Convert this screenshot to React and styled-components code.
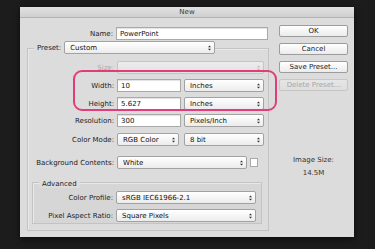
import React from "react";
import styled, { createGlobalStyle } from "styled-components";

const GlobalStyle = createGlobalStyle`
  html, body {
    margin: 0;
    padding: 0;
    background: #1c1c1c;
  }
  body {
    font-family: "DejaVu Sans", "Liberation Sans", sans-serif;
    font-size: 7px;
    color: #1e1e1e;
  }
`;

const Page = styled.div`
  width: 375px;
  height: 249px;
  padding: 7px 0 0 20px;
  box-sizing: border-box;
  background: #1c1c1c;
`;

const Dialog = styled.div`
  position: relative;
  width: 334px;
  height: 230px;
  background: #dcdcdc;
  box-shadow: 0 2px 6px rgba(0, 0, 0, 0.6);
  display: flex;
  flex-direction: column;
`;

const TitleBar = styled.div`
  height: 10px;
  line-height: 10px;
  text-align: center;
  color: #3a3a3a;
  background: linear-gradient(#e2e2e2, #cfcfcf);
  border-bottom: 1px solid #b4b4b4;
`;

const Body = styled.div`
  display: flex;
  flex: 1;
`;

const Left = styled.div`
  width: 255px;
  display: flex;
  flex-direction: column;
`;

const Right = styled.div`
  width: 69px;
  margin-left: 4px;
  padding-top: 7px;
  display: flex;
  flex-direction: column;
  gap: 6px;
`;

const Row = styled.div`
  display: flex;
  align-items: center;
  height: 13px;
  margin-top: ${p => p.mt || 0}px;
`;

const Label = styled.div`
  width: ${p => p.w}px;
  margin-right: 3px;
  text-align: right;
  white-space: nowrap;
  color: ${p => (p.disabled ? "#a9a9a9" : "#222")};
`;

const Field = styled.div`
  width: ${p => p.w}px;
  height: 100%;
  box-sizing: border-box;
  padding-left: 3px;
  display: flex;
  align-items: center;
  background: #fff;
  border: 1px solid #a9a9a9;
  box-shadow: inset 0 1px 1px rgba(0, 0, 0, 0.12);
  color: #111;
  margin-right: ${p => p.mr || 0}px;
`;

const SelectBox = styled.div`
  width: ${p => p.w}px;
  height: 100%;
  box-sizing: border-box;
  padding: 0 3px 0 5px;
  display: flex;
  align-items: center;
  justify-content: space-between;
  border: 1px solid ${p => (p.disabled ? "#c4c4c4" : "#a2a2a2")};
  border-radius: 2px;
  background: ${p =>
    p.disabled
      ? "linear-gradient(#ececec, #e2e2e2)"
      : "linear-gradient(#ffffff, #ececec)"};
  color: #111;
  margin-right: ${p => p.mr || 0}px;
`;

const Arrows = ({ faded }) => (
  <svg width="3" height="6" viewBox="0 0 3 6">
    <path d="M0 2.2 L1.5 0.5 L3 2.2 Z M0 3.8 L1.5 5.5 L3 3.8 Z" fill={faded ? "#b8b8b8" : "#333"} />
  </svg>
);

const Select = ({ w, children, disabled, mr }) => (
  <SelectBox w={w} disabled={disabled} mr={mr}>
    <span>{children}</span>
    <Arrows faded={disabled} />
  </SelectBox>
);

const Group = styled.div`
  margin: ${p => p.m};
  width: ${p => p.w}px;
  box-sizing: border-box;
  border: 1px solid #c3c3c3;
  box-shadow: inset 1px 1px 0 #e8e8e8;
  background: ${p => p.bg || "transparent"};
  padding-bottom: ${p => p.pb || 0}px;
`;

const GroupHead = styled.div`
  display: flex;
  align-items: center;
  height: ${p => p.h}px;
  margin-top: ${p => p.mt}px;
  padding-left: ${p => p.pl}px;
`;

const Legend = styled.span`
  padding: 0 3px;
  background: #dcdcdc;
  color: #222;
`;

const Check = styled.div`
  width: 8px;
  height: 9px;
  box-sizing: border-box;
  margin-left: 3px;
  background: #fff;
  border: 1px solid #a9a9a9;
`;

const Button = styled.div`
  height: 12px;
  box-sizing: border-box;
  display: flex;
  align-items: center;
  justify-content: center;
  border: 1px solid ${p => (p.disabled ? "#c6c6c6" : "#9c9c9c")};
  border-radius: 2px;
  background: ${p =>
    p.disabled
      ? "linear-gradient(#e6e6e6, #dedede)"
      : "linear-gradient(#ffffff, #ebebeb)"};
  color: ${p => (p.disabled ? "#a8a8a8" : "#1a1a1a")};
`;

const Info = styled.div`
  text-align: center;
  color: #333;
  line-height: 10px;
  margin-top: ${p => p.mt || 0}px;
`;

const Highlight = styled.div`
  position: absolute;
  left: 53px;
  top: 63px;
  width: 204px;
  height: 41px;
  box-sizing: border-box;
  border: 2px solid #e23d7a;
  border-radius: 9px;
  pointer-events: none;
`;

export default function App() {
  return (
    <>
      <GlobalStyle />
      <Page>
        <Dialog>
          <TitleBar>New</TitleBar>
          <Body>
            <Left>
              <Row mt={9}>
                <Label w={93}>Name:</Label>
                <Field w={152}>PowerPoint</Field>
              </Row>

              <Group m="8px 0 0 7px" w={242} pb={6}>
                <GroupHead h={13} mt={-8} pl={6}>
                  <Legend>Preset:</Legend>
                  <Select w={151}>Custom</Select>
                </GroupHead>

                <Row mt={7}>
                  <Label w={86} disabled>Size:</Label>
                  <Select w={147} disabled />
                </Row>
                <Row mt={5}>
                  <Label w={86}>Width:</Label>
                  <Field w={64} mr={3}>10</Field>
                  <Select w={80}>Inches</Select>
                </Row>
                <Row mt={5}>
                  <Label w={86}>Height:</Label>
                  <Field w={64} mr={3}>5.627</Field>
                  <Select w={80}>Inches</Select>
                </Row>
                <Row mt={4}>
                  <Label w={86}>Resolution:</Label>
                  <Field w={64} mr={3}>300</Field>
                  <Select w={80}>Pixels/Inch</Select>
                </Row>
                <Row mt={6}>
                  <Label w={86}>Color Mode:</Label>
                  <Select w={62} mr={5}>RGB Color</Select>
                  <Select w={80}>8 bit</Select>
                </Row>
                <Row mt={10}>
                  <Label w={86}>Background Contents:</Label>
                  <Select w={130}>White</Select>
                  <Check />
                </Row>

                <Group m="13px 0 0 4px" w={230} pb={1} bg="rgba(0,0,0,0.025)">
                  <GroupHead h={10} mt={-4} pl={6}>
                    <Legend>Advanced</Legend>
                  </GroupHead>
                  <Row mt={2}>
                    <Label w={80}>Color Profile:</Label>
                    <Select w={140}>sRGB IEC61966-2.1</Select>
                  </Row>
                  <Row mt={5}>
                    <Label w={80}>Pixel Aspect Ratio:</Label>
                    <Select w={140}>Square Pixels</Select>
                  </Row>
                </Group>
              </Group>
            </Left>

            <Right>
              <Button>OK</Button>
              <Button>Cancel</Button>
              <Button>Save Preset...</Button>
              <Button disabled>Delete Preset...</Button>
              <Info mt={58}>Image Size:</Info>
              <Info mt={-3}>14.5M</Info>
            </Right>
          </Body>
          <Highlight />
        </Dialog>
      </Page>
    </>
  );
}
